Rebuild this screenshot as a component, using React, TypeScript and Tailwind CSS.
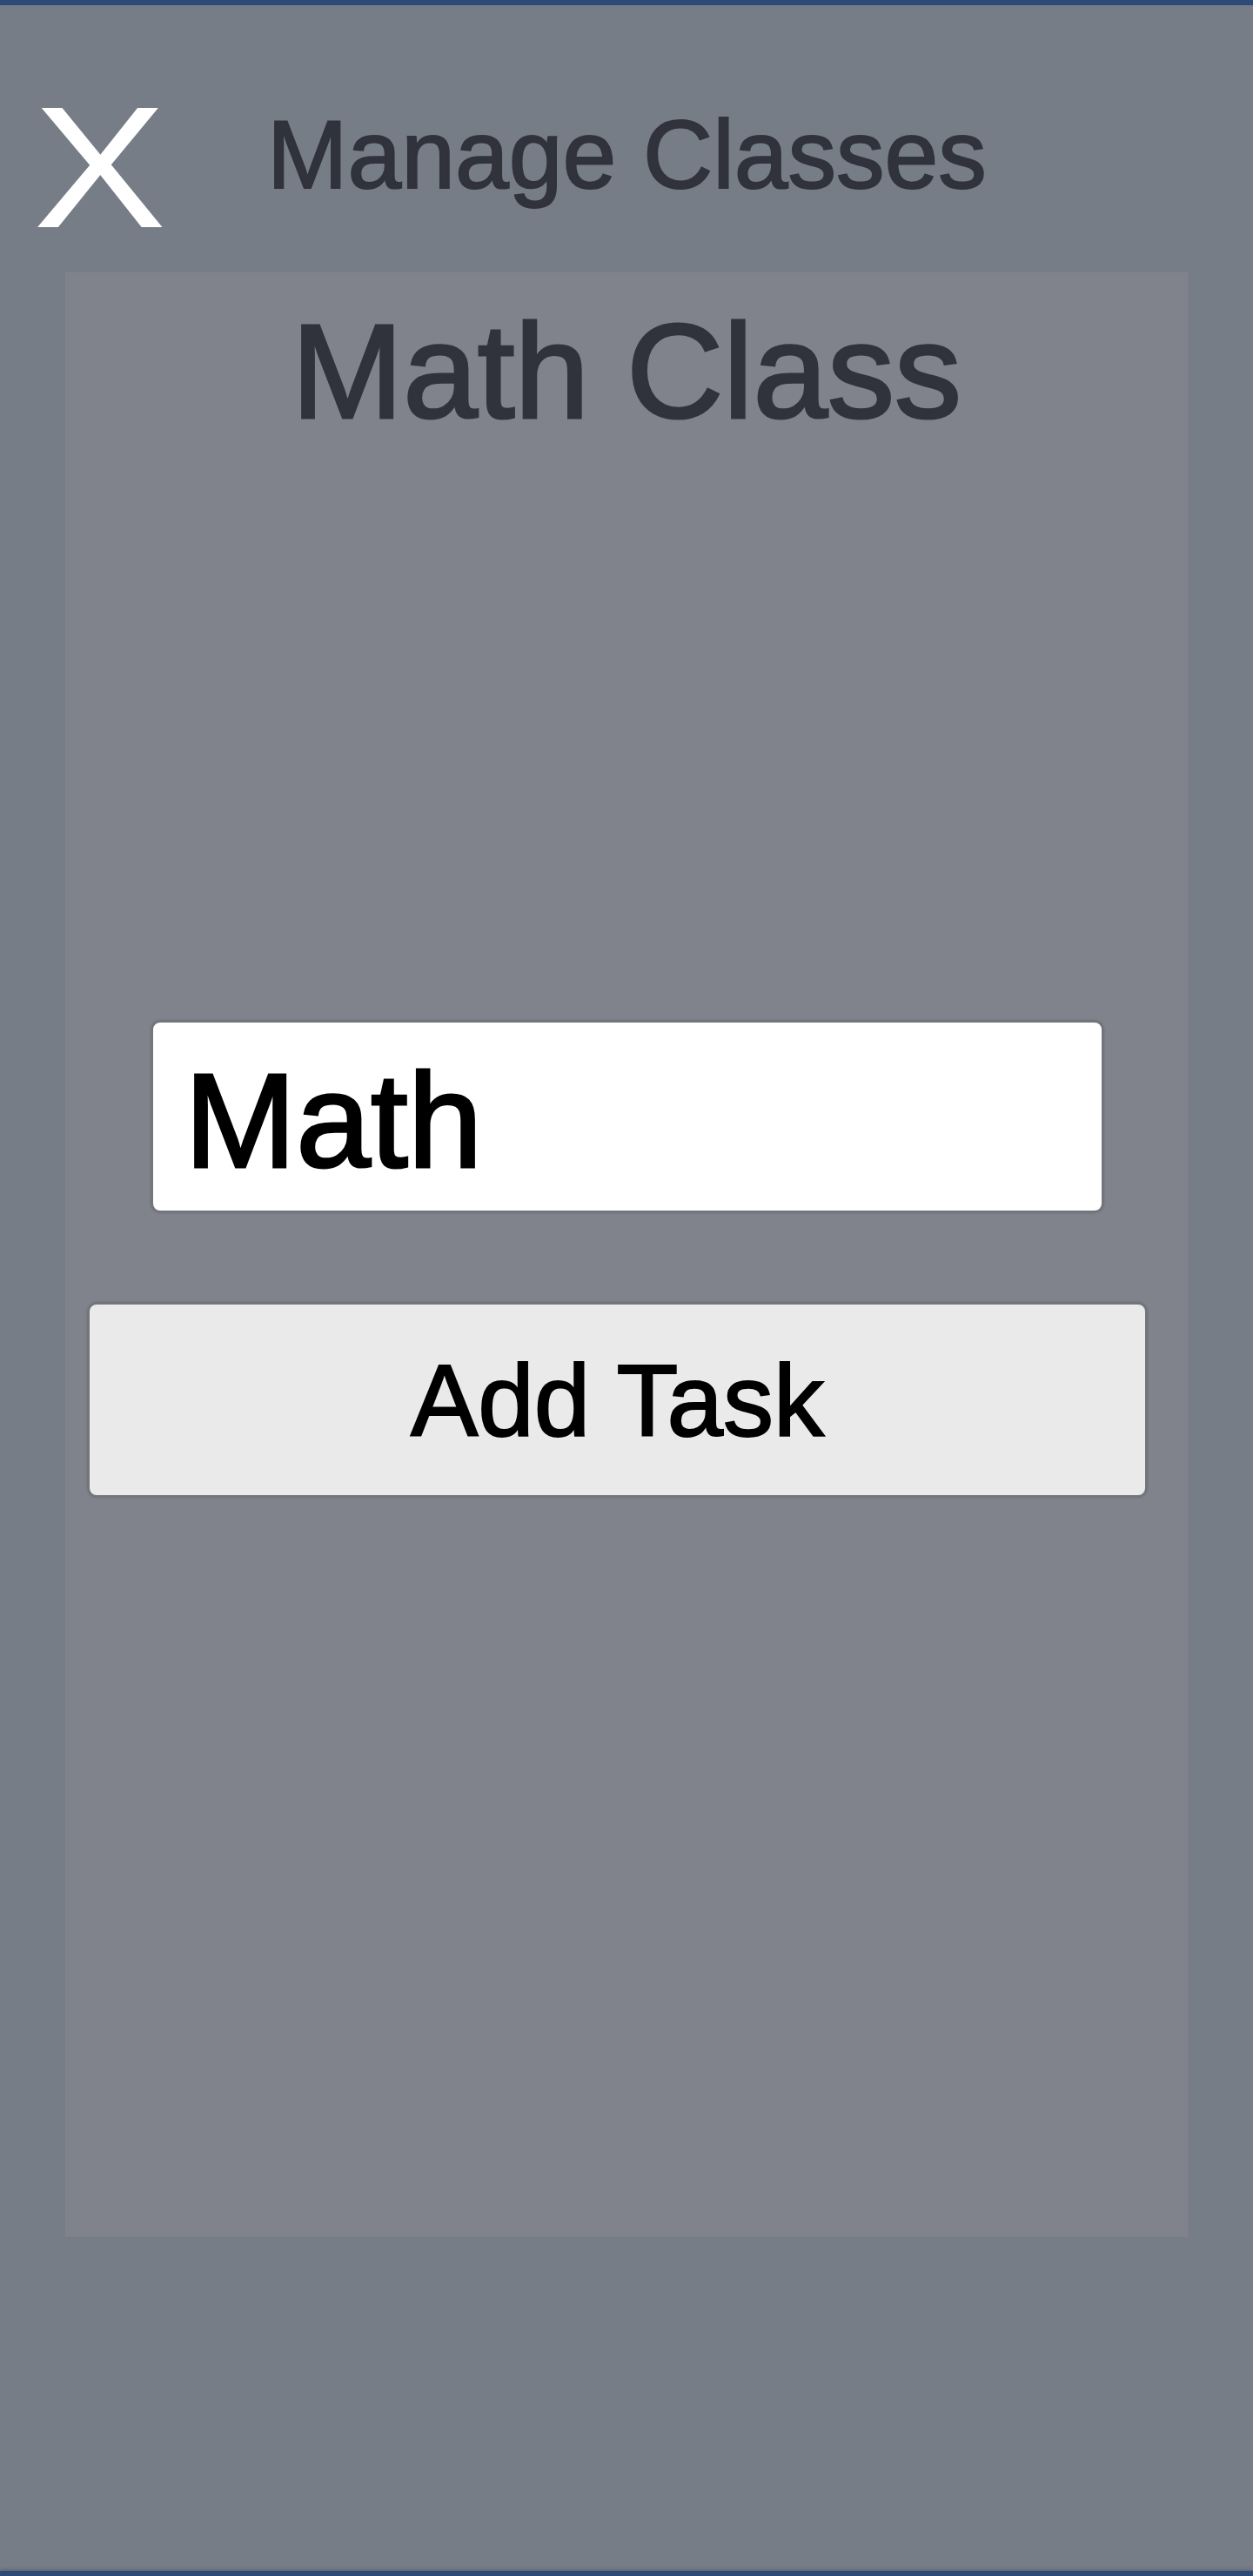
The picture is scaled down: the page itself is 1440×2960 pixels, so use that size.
export default function App() {
  return (
    <div className="flex h-[2960px] w-full flex-col bg-[#777d87] font-['Liberation_Sans',Arial,sans-serif]">
      <div className="h-[6px] w-full bg-[#2e4a78]" />

      <header className="flex h-[307px] items-start pl-[38px]">
        <button className="mt-[88px] w-[132px] origin-left scale-x-[1.16] text-[198px] leading-none text-white">
          X
        </button>
        <h1 className="ml-[137px] mt-[117px] text-[111px] font-normal leading-none text-[#30333b] [-webkit-text-stroke:2px_currentColor]">
          Manage Classes
        </h1>
      </header>

      <section className="ml-[75px] flex h-[2257px] w-[1290px] flex-col bg-[#80838c] pt-[37px]">
        <h2 className="text-center text-[154px] leading-none text-[#30333b] [-webkit-text-stroke:3px_currentColor]">
          Math Class
        </h2>

        <input
          readOnly
          value="Math"
          className="ml-[99px] mt-[669px] box-border h-[220px] w-[1094px] rounded-[10px] border-2 border-[#74767d] bg-white pl-[36px] pt-[10px] text-[154px] leading-none text-black shadow-[0_0_3px_rgba(0,0,0,0.3)] outline-none [-webkit-text-stroke:3px_black]"
        />

        <button className="ml-[26px] mt-[104px] box-border h-[223px] w-[1217px] rounded-[10px] border-2 border-[#74767d] bg-[#eaeaea] pt-[3px] text-center text-[116px] leading-none text-black shadow-[0_0_3px_rgba(0,0,0,0.3)] [-webkit-text-stroke:2px_black]">
          Add Task
        </button>
      </section>

      <div className="mt-auto h-[6px] w-full bg-[#2e4a78] shadow-[0_-2px_4px_rgba(0,0,0,0.15)]" />
    </div>
  );
}
